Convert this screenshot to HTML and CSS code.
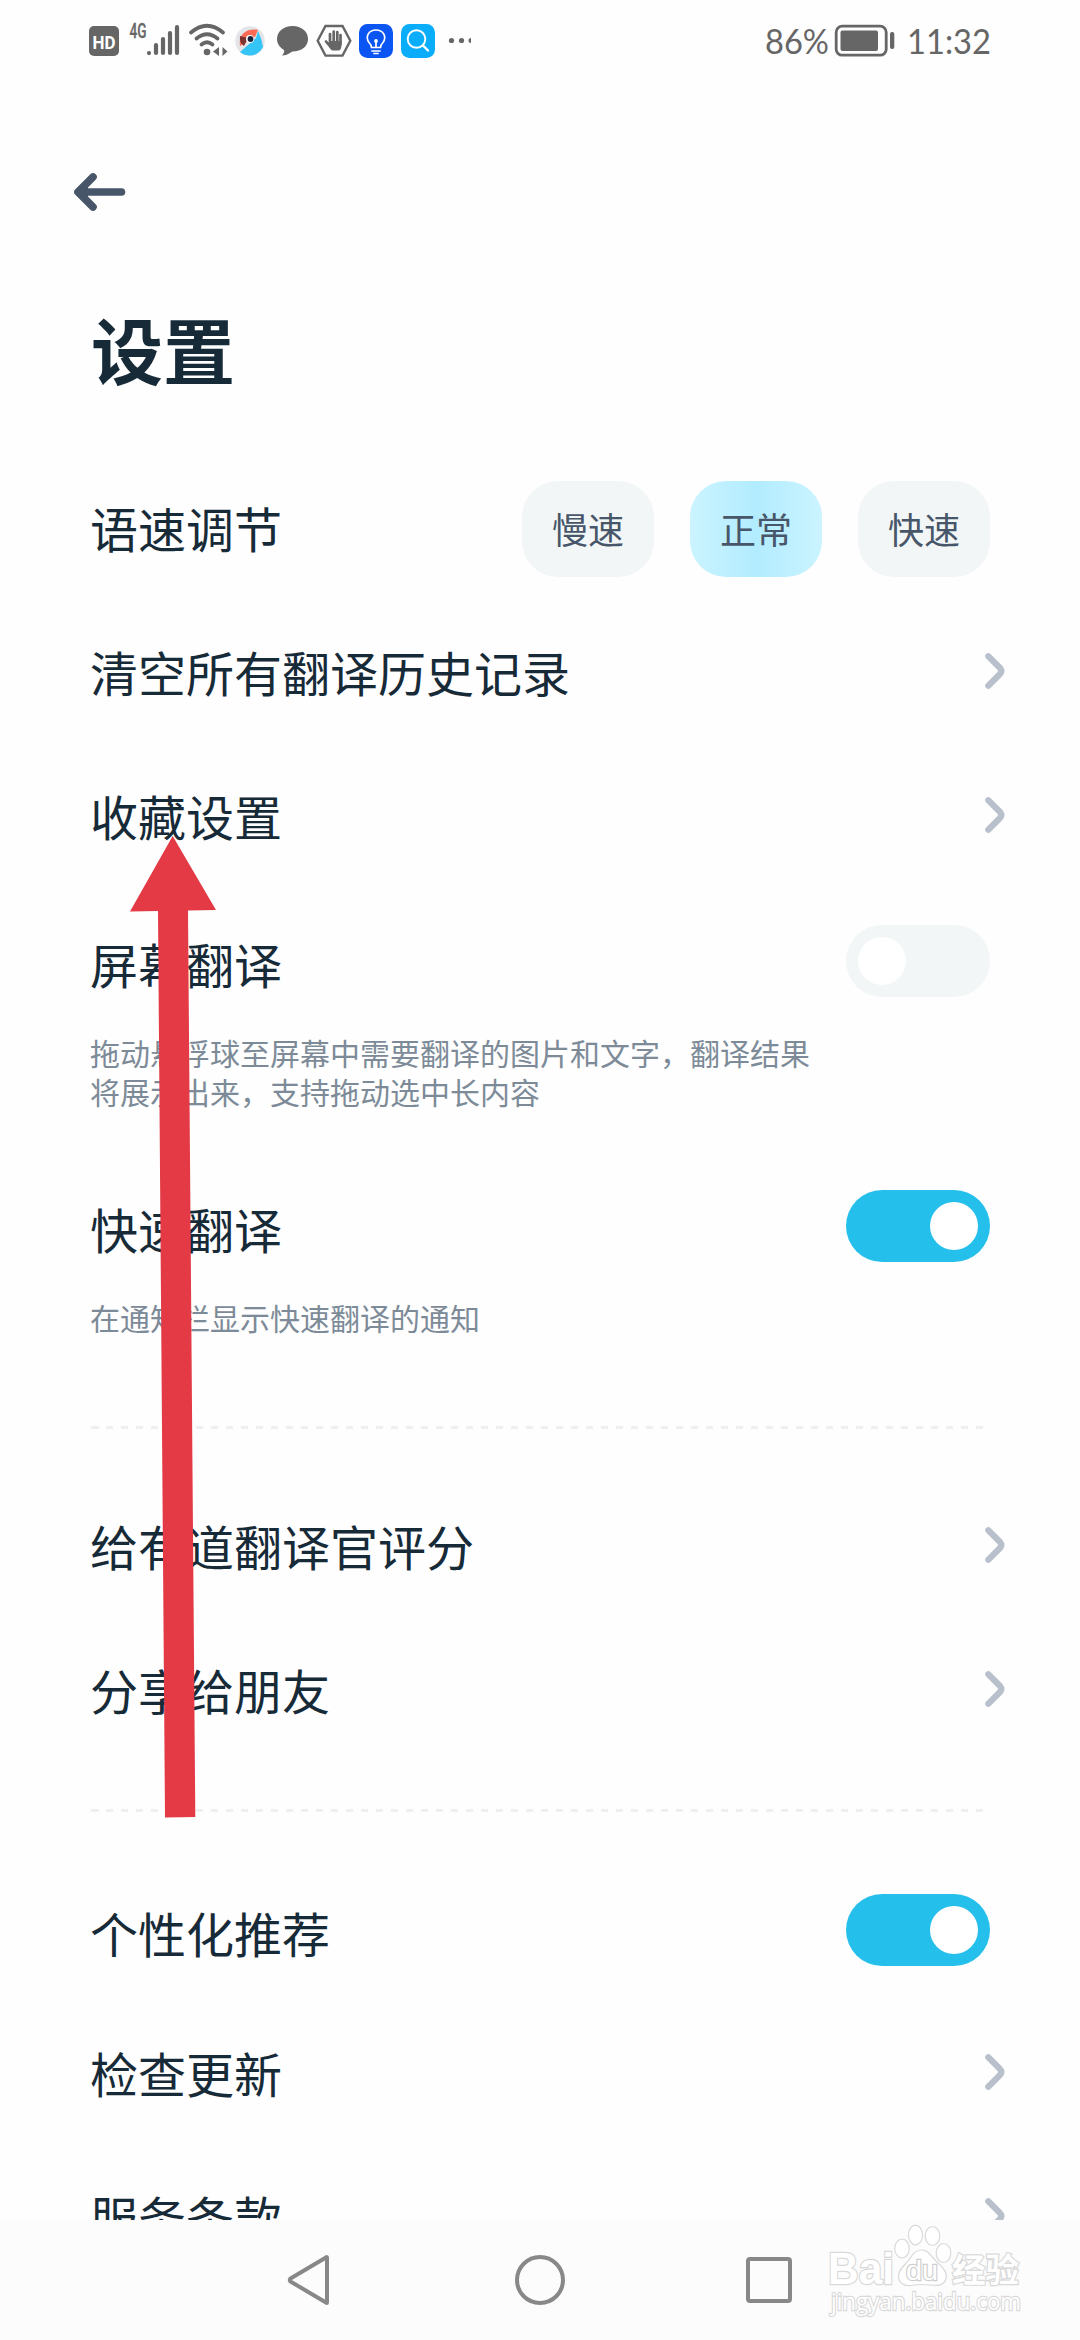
FILE: index.html
```html
<!DOCTYPE html>
<html lang="zh-CN">
<head>
<meta charset="utf-8">
<title>设置</title>
<link rel="stylesheet" href="styles.css">
</head>
<body>
<svg class="defs" aria-hidden="true">
  <symbol id="chevron" viewBox="0 0 20 36"><path d="M3.300 3.300 L15 15 Q17.600 18 15 21 L3.300 32.700" fill="none" stroke="#b8c0cc" stroke-width="6.200" stroke-linecap="round" stroke-linejoin="round"/></symbol>
</svg>
<div class="phone">
  <header class="status">
    <svg class="status-icons" width="400" height="40" viewBox="85 20 400 40">
      <rect x="89" y="26" width="30" height="30" rx="5" fill="#666"/>
      <text x="92.500" y="48.500" class="hd" textLength="23" lengthAdjust="spacingAndGlyphs">HD</text>
      <text x="129.500" y="38" class="net" textLength="17" lengthAdjust="spacingAndGlyphs">4G</text>
      <g stroke="#666" stroke-width="4.200" stroke-linecap="round">
        <path d="M149 53v.1M156 45v8M163 39v14M170 33v20M177 27v26"/>
      </g>
      <g fill="none" stroke="#666" stroke-width="3.800" stroke-linecap="round">
        <path d="M191 32.500Q207 19 223 32.500M196.500 38.500Q207 30 217.500 38.500M201.500 44.500Q207 40 212.500 44.500"/>
      </g>
      <circle cx="207" cy="52" r="3.300" fill="#666"/>
      <path d="M219 47v9l-6-4.500zM222.500 47v9l5-4.500z" fill="#666"/>
      <circle cx="250" cy="41" r="14.800" fill="#e3e5e8"/>
      <path d="M240 46C238 34 247 28 258 30L255 37Z" fill="#fb6a55"/>
      <path d="M240 36Q239 43 244 46L248 38Z" fill="#7b3430"/>
      <path d="M240 52L256 38L258 31Q262 39 263 47Q258 56 249 55.500Q243 55 240 52Z" fill="#35c4f6"/>
      <circle cx="250" cy="39" r="4" fill="#fff"/><circle cx="250.500" cy="39" r="2.900" fill="#17243a"/>
      <path d="M292.500 26C301.500 26 308 31.500 308 39S301.500 51.500 292.500 51.500C291.500 51.500 288 55.500 282 55.500C284 53.500 284.500 51.500 284 50C279.500 47.500 277 43.500 277 39C277 31.500 283.500 26 292.500 26Z" fill="#666"/>
      <path d="M325.500 26h17l7.800 14.800-7.800 14.800h-17l-7.800-14.800z" fill="none" stroke="#666" stroke-width="2.400"/>
      <g stroke="#666" stroke-width="2.700" stroke-linecap="round"><path d="M330 34v10M333.700 31.500v10M337.300 32v10M340.500 35v9M326 41.500l5 6"/></g>
      <path d="M329 41h12.500v5q0 3-2.500 4.500h-7Q330 49 329 46z" fill="#666"/>
      <rect x="359" y="24" width="34" height="34" rx="8.500" fill="#0b55f2"/>
      <g fill="none" stroke="#fff" stroke-width="1.700" stroke-linecap="round">
        <path d="M371.500 47.500Q371.500 45 369 42.500C365 37 368.500 30 376 30S387 37 383 42.500Q380.500 45 380.500 47.500ZM372 51h8M374 53.500h4M376 47v-6"/>
      </g><circle cx="376" cy="41" r="1.900" fill="#fff"/>
      <rect x="401" y="24" width="34" height="34" rx="8.500" fill="#09adfa"/>
      <circle cx="416.500" cy="39" r="8.800" fill="none" stroke="#fff" stroke-width="1.900"/>
      <path d="M423 45.500l5 5" stroke="#fff" stroke-width="2.400" stroke-linecap="round"/>
      <g fill="#666"><circle cx="451.500" cy="40.500" r="2.600"/><circle cx="461.500" cy="40.500" r="2.600"/><path d="M471 38q-2.500 0-2.500 2.500t2.500 2.500z"/></g>
    </svg>
    <svg class="status-info" width="230" height="40" viewBox="762 20 230 40">
      <text x="765" y="54" class="clock" textLength="64" lengthAdjust="spacingAndGlyphs">86%</text>
      <rect x="836.200" y="26.200" width="50" height="29" rx="6" fill="none" stroke="#666" stroke-width="2.800"/>
      <rect x="840.500" y="30.500" width="37.500" height="20.500" rx="2" fill="#666"/>
      <rect x="890" y="32" width="4.300" height="17" rx="2" fill="#666"/>
      <text x="907" y="54" class="clock" textLength="84" lengthAdjust="spacingAndGlyphs">11:32</text>
    </svg>
  </header>
  <nav class="back">
    <svg width="52" height="40" viewBox="0 0 52 40"><path d="M47.500 20H6M19 5L4 20L19 35" fill="none" stroke="#475669" stroke-width="7.600" stroke-linecap="round" stroke-linejoin="round"/><path d="M4 20l10-9v18z" fill="#475669"/></svg>
  </nav>
  <h1 class="title">设置</h1>
  <main class="list">
    <div class="row">
      <span class="label">语速调节</span>
      <div class="pills"><span class="pill">慢速</span><span class="pill active">正常</span><span class="pill">快速</span></div>
    </div>
    <div class="row"><span class="label">清空所有翻译历史记录</span><svg class="chevron"><use href="#chevron"/></svg></div>
    <div class="row"><span class="label">收藏设置</span><svg class="chevron"><use href="#chevron"/></svg></div>
    <div class="row toggle-row"><span class="label">屏幕翻译</span><span class="toggle"></span></div>
    <p class="hint">拖动悬浮球至屏幕中需要翻译的图片和文字，翻译结果<br>将展示出来，支持拖动选中长内容</p>
    <div class="row toggle-row spaced"><span class="label">快速翻译</span><span class="toggle on"></span></div>
    <p class="hint">在通知栏显示快速翻译的通知</p>
    <div class="divider first"></div>
    <div class="row"><span class="label">给有道翻译官评分</span><svg class="chevron"><use href="#chevron"/></svg></div>
    <div class="row"><span class="label">分享给朋友</span><svg class="chevron"><use href="#chevron"/></svg></div>
    <div class="divider"></div>
    <div class="row toggle-row"><span class="label">个性化推荐</span><span class="toggle on"></span></div>
    <div class="row"><span class="label">检查更新</span><svg class="chevron"><use href="#chevron"/></svg></div>
    <div class="row"><span class="label">服务条款</span><svg class="chevron"><use href="#chevron"/></svg></div>
  </main>
  <footer class="navbar">
    <svg width="44" height="52" viewBox="0 0 44 52"><path d="M40 3.500V48.500Q40 49.500 39 48.500L3.500 27.500Q2 26 3.500 24.500L39 3.500Q40 2.500 40 3.500Z" fill="none" stroke="#888" stroke-width="4" stroke-linejoin="round"/></svg>
    <span class="home"></span>
    <span class="recent"></span>
  </footer>
  <svg class="watermark" width="220" height="120" viewBox="0 0 220 120">
    <g fill="#fff" stroke="#d9d9d9" stroke-width="1.200">
      <ellipse cx="82" cy="38.500" rx="7.300" ry="9.500"/><ellipse cx="95.500" cy="25" rx="7" ry="9.800"/><ellipse cx="112.500" cy="26" rx="7.300" ry="9.500"/><ellipse cx="123.500" cy="43" rx="7.300" ry="9.500"/>
      <path d="M102 40C109 40 111 47 117 52C123 57 128 63 126 69C124 76 117 76 111 75Q102 74 94 75C86 77 79 74 78.500 67C78 60 84 56 88 51C92 46 94 40 102 40Z"/>
      <text x="8" y="74" class="wm-main" textLength="66" lengthAdjust="spacingAndGlyphs">Bai</text>
      <text x="86" y="70" class="wm-du" textLength="32" lengthAdjust="spacingAndGlyphs">du</text>
      <text x="132" y="71.500" class="wm-cn" textLength="67" lengthAdjust="spacingAndGlyphs">经验</text>
      <text x="11" y="100" class="wm-url" textLength="190" lengthAdjust="spacingAndGlyphs">jingyan.baidu.com</text>
    </g>
  </svg>
  <svg class="pointer" width="90" height="984" viewBox="128 835 90 984"><path d="M172.700 836L216 910L188 910.500L195.300 1817L165 1817.500L158 911L130 911.500Z" fill="#e33a45"/></svg>
</div>
</body>
</html>
```
FILE: styles.css
```css
* { box-sizing: border-box; }
body { margin: 0; font-family: "Noto Sans CJK SC", sans-serif; }
.defs { display: none; }
.phone { position: relative; display: flex; flex-direction: column; width: 1080px; height: 2340px; overflow: hidden; background: #fefefe; color: #172a38; }
.status { display: flex; justify-content: space-between; flex: none; height: 80px; padding: 20px 88px 0 85px; }
.status svg { display: block; overflow: visible; }
.hd { font: bold 19px "Roboto", sans-serif; fill: #fff; }
.net { font: 500 20px "Roboto", sans-serif; fill: #666; stroke: #666; stroke-width: .3px; }
.clock { font: 35px "Lato", sans-serif; fill: #666; }
.back { flex: none; height: 180px; padding: 92px 0 0 74px; }
.back svg { display: block; }
.title { flex: none; height: 197px; margin: 0; padding: 36px 0 0 91px; font-size: 72px; line-height: 104px; font-weight: 700; }
.list { flex: 1; min-height: 0; overflow: hidden; padding: 0 90px; }
.row { display: flex; align-items: center; justify-content: space-between; height: 144px; }
.label { font-size: 48px; line-height: 72px; margin-bottom: 4px; white-space: nowrap; }
.toggle-row .label { margin: 3px 0 0; }
.pills { display: flex; gap: 36px; }
.pill { display: flex; align-items: center; justify-content: center; width: 132px; height: 96px; padding-bottom: 2px; border-radius: 36px; background: #f2f6f7; color: #475669; font-size: 36px; }
.pill.active { background: linear-gradient(90deg, #cbf4ff, #b2ecff 50%, #cbf4ff); }
.chevron { width: 20px; height: 36px; margin: 0 -15px 4px 0; }
.toggle { display: flex; align-items: center; width: 144px; height: 72px; padding: 0 12px; border-radius: 36px; background: #f2f6f7; }
.toggle::before { content: ""; width: 48px; height: 48px; border-radius: 50%; background: #fff; }
.toggle.on { justify-content: flex-end; background: #24bfeb; }
.spaced { margin-top: 43px; }
.hint { margin: 0; font-size: 30px; line-height: 39px; color: #7d8b98; white-space: nowrap; }
.divider { height: 3px; margin: 46px 6px 46px 1px; background: repeating-linear-gradient(90deg, #efefef 0 7.500px, transparent 7.500px 15px); }
.divider.first { margin-top: 89px; }
.navbar { display: flex; align-items: center; flex: none; height: 120px; padding-left: 287px; background: #fcfcfc; }
.home { width: 50px; height: 50px; margin-left: 184px; border: 4px solid #888; border-radius: 50%; }
.recent { width: 46px; height: 46px; margin-left: 181px; border: 4px solid #888; border-radius: 4px; }
.watermark { position: absolute; left: 820px; top: 2210px; }
.watermark text { paint-order: stroke; stroke-width: 2.400px; stroke: #d9d9d9; }
.wm-main { font: bold 45px "Liberation Sans", sans-serif; }
.watermark .wm-du { font: 27px "Liberation Sans", sans-serif; fill: #fff; stroke: #cfcfcf; }
.wm-cn { font: bold 33px "Noto Sans CJK SC", sans-serif; }
.wm-url { font: 24px "Open Sans", sans-serif; }
.pointer { position: absolute; left: 128px; top: 835px; }
```
